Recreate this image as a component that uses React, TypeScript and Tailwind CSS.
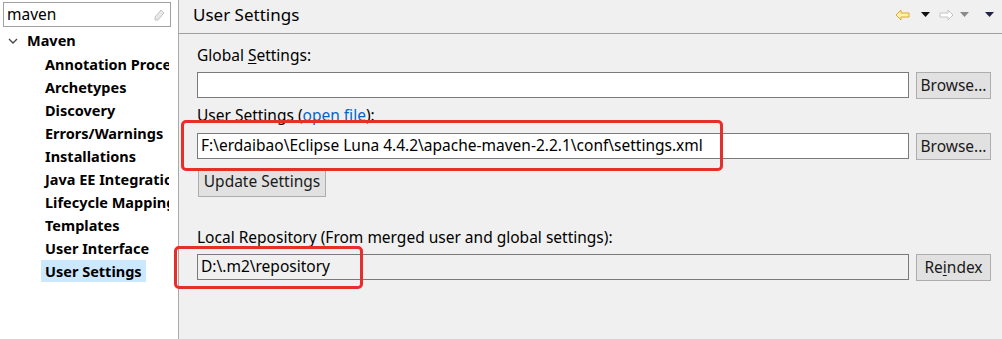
import React from "react";

const font = { fontFamily: '"Noto Sans", "Open Sans", Arial, sans-serif' };

const children = [
  "Annotation Processing",
  "Archetypes",
  "Discovery",
  "Errors/Warnings",
  "Installations",
  "Java EE Integration",
  "Lifecycle Mappings",
  "Templates",
  "User Interface",
  "User Settings",
];

function Tri({ color, className = "" }: { color: string; className?: string }) {
  return (
    <svg className={className} width="9" height="6" viewBox="0 0 9 6">
      <path d="M0 0h9L4.5 5z" fill={color} />
    </svg>
  );
}

function Btn({ children, className = "" }: { children: React.ReactNode; className?: string }) {
  return (
    <div className={`h-[27px] flex items-center justify-center bg-[#e1e1e1] border border-[#adadad] text-[15.5px] text-[#1a1a1a] ${className}`}>
      {children}
    </div>
  );
}

export default function App() {
  return (
    <div className="relative w-[1002px] h-[339px] flex overflow-hidden bg-[#f0f0f0]" style={font}>
      {/* preference tree */}
      <aside className="w-[179px] shrink-0 bg-white border-r border-[#a9a9a9] flex flex-col">
        <div className="mt-[2px] ml-[3px] w-[168px] h-[25px] border border-[#a0a0a0] flex items-center pl-[3px] pr-[4px]">
          <span className="flex-1 text-[15.5px] text-black leading-none">maven</span>
          <svg width="14" height="14" viewBox="0 0 14 14">
            <path d="M9 2l3 3-6 7H3V9z" fill="#e8e8e8" stroke="#c4c4c4" />
          </svg>
        </div>
        <div className="mt-[2px] w-[169px] overflow-hidden flex flex-col text-[14.5px] font-bold text-black">
          <div className="h-[23px] flex items-center">
            <svg className="ml-[8px] mr-[9px]" width="10" height="6" viewBox="0 0 10 6">
              <path d="M1 1l4 4 4-4" fill="none" stroke="#444" strokeWidth="1.3" />
            </svg>
            <span>Maven</span>
          </div>
          {children.map((c) => (
            <div key={c} className="h-[23px] flex items-center pl-[41px]">
              <span className={`whitespace-nowrap px-[4px] leading-[22px] ${c === "User Settings" ? "bg-[#cce8ff]" : ""}`}>{c}</span>
            </div>
          ))}
        </div>
      </aside>

      {/* page */}
      <main className="flex-1 flex flex-col">
        <div className="h-[34px] shrink-0 border-b border-[#a0a0a0] flex items-center pl-[14px] pr-[8px] pb-[3px]">
          <span className="flex-1 text-[17px] text-black">User Settings</span>
          <div className="flex items-center">
            <svg width="16" height="12" viewBox="0 0 16 12">
              <path d="M1 6l5-5v3h8v4H6v3z" fill="#fff3a8" stroke="#e0a630" strokeLinejoin="round" />
            </svg>
            <Tri color="#111" className="ml-[10px]" />
            <svg className="ml-[8px]" width="16" height="12" viewBox="0 0 16 12">
              <path d="M15 6l-5-5v3H2v4h8v3z" fill="#fff" stroke="#c4c4c4" strokeLinejoin="round" />
            </svg>
            <Tri color="#8a8a8a" className="ml-[6px]" />
            <Tri color="#23234a" className="ml-[16px]" />
          </div>
        </div>

        <div className="flex flex-col pl-[18px] pr-[11px] text-[15.5px] text-black">
          <div className="mt-[11px] h-[20px] leading-[20px]">
            Global <span className="underline underline-offset-2">S</span>ettings:
          </div>
          <div className="mt-[7px] flex gap-[7px]">
            <div className="flex-1 h-[26px] bg-white border border-[#7a7a7a]" />
            <Btn className="w-[75px]">Browse...</Btn>
          </div>

          <div className="mt-[6px] h-[20px] leading-[20px]">
            User Settings (<span className="text-[#0066cc]">open file</span>):
          </div>
          <div className="mt-[8px] flex gap-[7px]">
            <div className="flex-1 h-[26px] bg-white border border-[#7a7a7a] flex items-center pl-[3px] whitespace-nowrap">
              F:\erdaibao\Eclipse Luna 4.4.2\apache-maven-2.2.1\conf\settings.xml
            </div>
            <Btn className="w-[75px]">Browse...</Btn>
          </div>
          <div className="mt-[9px] flex">
            <Btn className="ml-[1px] w-[128px] h-[28px] pb-[2px]">Update Settings</Btn>
          </div>

          <div className="mt-[30px] h-[20px] leading-[20px]">
            Local Repository (From merged user and global settings):
          </div>
          <div className="mt-[7px] flex gap-[7px]">
            <div className="flex-1 h-[26px] bg-[#f0f0f0] border border-[#7a7a7a] flex items-center pl-[3px]">
              D:\.m2\repository
            </div>
            <Btn className="w-[75px]">
              Re<span className="underline underline-offset-2">i</span>ndex
            </Btn>
          </div>
        </div>
      </main>

      {/* red annotation marks */}
      <div className="absolute left-[181px] top-[120px] w-[542px] h-[51px] border-[3px] border-[#e62e2b] rounded-[5px] pointer-events-none" />
      <div className="absolute left-[174px] top-[246px] w-[189px] h-[43px] border-[3px] border-[#e62e2b] rounded-[5px] pointer-events-none" />
    </div>
  );
}
